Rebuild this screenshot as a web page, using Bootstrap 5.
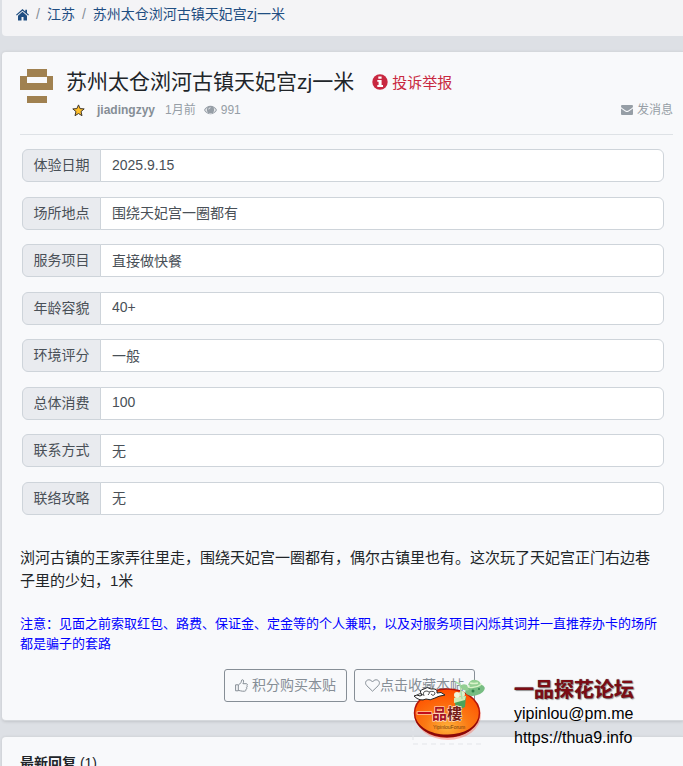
<!DOCTYPE html>
<html lang="zh-CN">
<head>
<meta charset="utf-8">
<meta name="viewport" content="width=device-width, initial-scale=1">
<title>苏州太仓浏河古镇天妃宫zj一米</title>
<link rel="stylesheet" href="https://cdn.jsdelivr.net/npm/bootstrap@5.3.0/dist/css/bootstrap.min.css">
<style>
body{background:#dde0e5;font:14px/21px "Liberation Sans","Noto Sans CJK SC",sans-serif;color:#212529}
.page{height:100vh;overflow:hidden;padding-left:2px}
.crumbs{background:#f4f4f6;height:36px;padding:4px 14px;border-radius:0 0 0 4px;margin-bottom:15px}
.crumbs .breadcrumb{--bs-breadcrumb-divider-color:#868e96}
.crumbs .breadcrumb-item{--bs-breadcrumb-item-padding-x:7px}
.crumbs a{color:#1f4e82;text-decoration:none}
.panel{--bs-card-bg:#f8f9fb;--bs-card-border-color:#d5d8dc;border-width:1px 0;border-radius:4px 0 0 4px;padding:14px 10px 18px 18px;box-shadow:0 1px 3px #0000001f;margin-bottom:15px}
.topic-head{border-bottom:1px solid #dee2e6;height:69px;gap:13px}
.avatar{width:33px;height:34px;margin-top:3px}
.topic-title{font-size:21px;line-height:32px;font-weight:400}
.report{font-size:15px;color:#c82840;text-decoration:none;margin-left:18px}
.meta{font-size:12px;line-height:24px;color:#969ea6;padding-left:6px}
.meta a{color:inherit;text-decoration:none}
.meta .author{color:#868e96;font-weight:700;margin:0 10px 0 12px}
.fields{min-height:366px;margin:14px 9px 0 2px}
.fields .input-group{--bs-border-radius:3px}
.fields .input-group-text,.fields .form-control{font-size:14px;line-height:21px;height:33px;color:#495057;border-color:#ced4da}
.fields .input-group-text{background:#e9ebef;width:79px;justify-content:center;padding:5px 0}
.fields .form-control{background:#fff;padding:4px 11px 6px}
.post-text{font-size:15px;line-height:23px;padding-right:14px;margin:31px 0 22px}
.notice{font-size:13px;line-height:20px;color:#00f;padding-right:14px;margin-bottom:15px}
.actions{gap:7px;padding-left:6px}
.action{--bs-btn-color:#868e96;--bs-btn-border-color:#868e96;--bs-btn-border-radius:3px;--bs-btn-padding-x:10px;--bs-btn-padding-y:5px;--bs-btn-font-size:14px;--bs-btn-line-height:21px}
.replies-title{font-size:14px;line-height:21px;margin-top:2px}
.stamp{position:absolute;left:412px;top:678px;z-index:5}
.stamp svg{width:74px;height:68px}
.stamp-text{color:#000;font-size:16px;line-height:24px;margin-left:28px}
.stamp-name{font-size:20px;line-height:24px;font-weight:700;color:#7c0c14;text-shadow:0 0 1px #444,1px 1px 1px #999}
</style>
</head>
<body>
<div class="page position-relative">
  <nav class="crumbs" aria-label="breadcrumb">
    <ol class="breadcrumb mb-0">
      <li class="breadcrumb-item"><a href="#" aria-label="首页"><svg width="13" height="12" viewBox="0 0 13 12"><path fill="currentColor" d="M6.5 0 0 5.7l.8.9 5.7-4.9 5.7 4.9.8-.9-2-1.8V.7H9.300v1.700zM6.500 2.800 2 6.700V11.500h3.500V8h2v3.500H11V6.700z"/></svg></a></li>
      <li class="breadcrumb-item"><a href="#">江苏</a></li>
      <li class="breadcrumb-item"><a href="#">苏州太仓浏河古镇天妃宫zj一米</a></li>
    </ol>
  </nav>

  <main class="card panel">
    <header class="topic-head d-flex">
      <svg class="avatar flex-shrink-0" viewBox="0 0 33 34" fill="#a08150" shape-rendering="crispEdges"><path d="M7 0h20v7h6v14H0V7h7zM7 8v6h20V8zM7 27h20v7H7z" fill-rule="evenodd"/></svg>
      <div class="flex-grow-1">
        <div class="d-flex align-items-center">
          <h1 class="topic-title mb-0">苏州太仓浏河古镇天妃宫zj一米</h1>
          <a class="report d-flex align-items-center" href="#"><svg class="me-1" width="16" height="16" viewBox="0 0 16 16"><circle cx="8" cy="8" r="7.7" fill="currentColor"/><path fill="#fff" d="M6.3 2.5h3.3v2.3H6.3zM5.3 6.1h4.3v5H11v1.8H5.3v-1.8h1.3V7.8H5.3z"/></svg>投诉举报</a>
        </div>
        <div class="meta d-flex align-items-center">
          <svg width="13" height="13" viewBox="0 0 13 13"><path fill="#ffc02b" stroke="#40372a" stroke-linejoin="round" d="m6.5.9 1.6 3.7 4.1.3L9 7.6l1 4.1-3.5-2.2L3 11.7l1-4.1L.8 4.9l4.1-.3z"/></svg>
          <a class="author" href="#">jiadingzyy</a>
          <span>1月前</span>
          <svg class="ms-2 me-1" width="13" height="10" viewBox="0 0 13 10"><path fill="currentColor" fill-rule="evenodd" d="M6.5.7C3.6.7 1.4 2.5 0 5c1.4 2.5 3.6 4.3 6.5 4.3S11.6 7.5 13 5C11.6 2.5 9.4.7 6.5.7zM4 2.3a3.6 3.6 0 1 0 5 0c1.2.6 2.1 1.500 2.900 2.700-1.300 2-3.100 3.300-5.400 3.300S2.400 7 1.100 5C1.900 3.800 2.800 2.900 4 2.300z"/><circle cx="6.500" cy="4.600" r="2.900" fill="currentColor"/><path d="M4.700 4.400q.1-1.600 1.800-1.700" fill="none" stroke="#f8f9fb" stroke-width=".8"/></svg>
          <span>991</span>
          <a class="ms-auto d-flex align-items-center" href="#"><svg class="me-1" width="12" height="10" viewBox="0 0 12 10"><path fill="currentColor" d="M1 0h10q1 0 1 1.200Q12 2.200 11 3L7.300 5.600Q6 6.500 4.700 5.600L1 3Q0 2.200 0 1.200 0 0 1 0zM0 3.400 4.200 6.400Q6 7.700 7.800 6.400L12 3.400V9q0 1-1 1H1Q0 10 0 9z"/></svg>发消息</a>
        </div>
      </div>
    </header>

    <form class="fields d-flex flex-column justify-content-between">
      <div class="input-group"><label class="input-group-text" for="f1">体验日期</label><input class="form-control" id="f1" value="2025.9.15" readonly></div>
      <div class="input-group"><label class="input-group-text" for="f2">场所地点</label><input class="form-control" id="f2" value="围绕天妃宫一圈都有" readonly></div>
      <div class="input-group"><label class="input-group-text" for="f3">服务项目</label><input class="form-control" id="f3" value="直接做快餐" readonly></div>
      <div class="input-group"><label class="input-group-text" for="f4">年龄容貌</label><input class="form-control" id="f4" value="40+" readonly></div>
      <div class="input-group"><label class="input-group-text" for="f5">环境评分</label><input class="form-control" id="f5" value="一般" readonly></div>
      <div class="input-group"><label class="input-group-text" for="f6">总体消费</label><input class="form-control" id="f6" value="100" readonly></div>
      <div class="input-group"><label class="input-group-text" for="f7">联系方式</label><input class="form-control" id="f7" value="无" readonly></div>
      <div class="input-group"><label class="input-group-text" for="f8">联络攻略</label><input class="form-control" id="f8" value="无" readonly></div>
    </form>

    <p class="post-text">浏河古镇的王家弄往里走，围绕天妃宫一圈都有，偶尔古镇里也有。这次玩了天妃宫正门右边巷子里的少妇，1米</p>
    <p class="notice">注意：见面之前索取红包、路费、保证金、定金等的个人兼职，以及对服务项目闪烁其词并一直推荐办卡的场所都是骗子的套路</p>

    <div class="actions d-flex justify-content-center">
      <button type="button" class="btn action d-flex align-items-center"><svg class="me-1" width="13" height="13" viewBox="0 0 13 13" fill="none" stroke="currentColor" stroke-linejoin="round"><path d="M.6 5.800h2.700v6H.6zM3.300 6.200C4.500 5.700 5 4.400 5.900 3.600 6.500 3 6.200.7 7.200.7c1.900 0 1.600 2.300.7 4h3.400c1.400 0 1.400 1.800.4 2.100.9.500.6 1.700-.3 1.900.6.600.3 1.600-.5 1.700.2 1-.4 1.800-1.300 1.800H7.400c-1.600 0-2.500-.8-4.100-.8"/></svg>积分购买本贴</button>
      <button type="button" class="btn action d-flex align-items-center"><svg width="15" height="13" viewBox="0 0 15 13" fill="none" stroke="currentColor" stroke-linejoin="round"><path d="M7.500 12.200 1.800 6.700C-.7 4 1 .8 3.900.8c1.700 0 2.700 1 3.600 2.100C8.400 1.800 9.400.8 11.100.8c2.900 0 4.600 3.200 2.100 5.900z"/></svg>点击收藏本帖</button>
    </div>
  </main>

  <section class="card panel">
    <h2 class="replies-title"><b>最新回复</b> <span class="fw-normal">(1)</span></h2>
  </section>

  <aside class="stamp d-flex">
    <svg viewBox="0 0 74 68" role="img" aria-label="一品樓">
      <defs><radialGradient id="glow" cx=".5" cy=".8" r=".75"><stop offset="0" stop-color="#ffb13b"/><stop offset=".45" stop-color="#fb7a14"/><stop offset="1" stop-color="#ff5000"/></radialGradient></defs>
      <path d="M1 48v18h72" fill="none" stroke="#e3e5e9" stroke-dasharray="5 4"/>
      <ellipse cx="36" cy="37" rx="33" ry="25" fill="#ff6650" opacity=".4"/>
      <ellipse cx="35" cy="35" rx="32.500" ry="24" fill="url(#glow)" stroke="#b5150b" stroke-width="1.500"/>
      <path d="M2.500 38C5 52 20 59 36 59S65 51 67.500 38C63 50 53 56 36 56.500S6 49 2.500 38z" fill="#8a0909"/>
      <path d="M2 18q3-2 6 0l2-1q-4-5 2-6 3-3 7 0 7-1 6 4 4-2 8 2-7 1-10 3-5 3-9 1-6 3-12-3z" fill="#fff" stroke="#222"/>
      <path d="M5 17q3-3 6 0M12 18q-2-5 3-5 4 1 1 4M17 14q6-2 6 2-2 3-4 0" fill="none" stroke="#222" stroke-width=".8"/>
      <path d="m42 20 12-2-1 11q-5 3-9 1z" fill="#4aa35c"/><path d="m42 20 12-2-1 4-11 3z" fill="#d1edba"/>
      <circle cx="45" cy="17" r="3" fill="#eff7dc"/><circle cx="50" cy="16" r="3" fill="#dff0cc"/>
      <path d="m50 21-2-15-5-2" stroke="#a9dfab" stroke-width="1.500" fill="none"/>
      <ellipse cx="63" cy="12" rx="10" ry="5.500" fill="#77bd82" transform="rotate(-15 63 12)"/>
      <path d="M48 8q3-3 7-1l2 5q-6 2-9-4zM56 7q2-6 8-5 5 1 5 6-6 3-13-1z" fill="#93cf93"/>
      <path d="M56 9q7 2 14-3M58 5q4 1 8 0" stroke="#d9f3c8" stroke-width="1.500" fill="none"/><circle cx="61" cy="13" r="1.500" fill="#32834b"/><circle cx="67" cy="11" r="1" fill="#32834b"/>
      <g font-family="'Noto Sans CJK SC',sans-serif" font-weight="700" font-size="15" stroke="#ffe6d5" stroke-width="1.200" paint-order="stroke"><text x="5" y="41" fill="#c20c1c">一</text><text x="20" y="41" fill="#a51421">品</text><text x="35" y="41" fill="#762018">樓</text></g>
      <text x="21" y="51" font-family="'Liberation Sans',sans-serif" font-size="5" fill="#773a0a">YipinlouForum</text>
    </svg>
    <div class="stamp-text"><div class="stamp-name">一品探花论坛</div><div>yipinlou@pm.me</div><div>https://thua9.info</div></div>
  </aside>
</div>
<script src="https://cdn.jsdelivr.net/npm/bootstrap@5.3.0/dist/js/bootstrap.bundle.min.js"></script>
</body>
</html>
